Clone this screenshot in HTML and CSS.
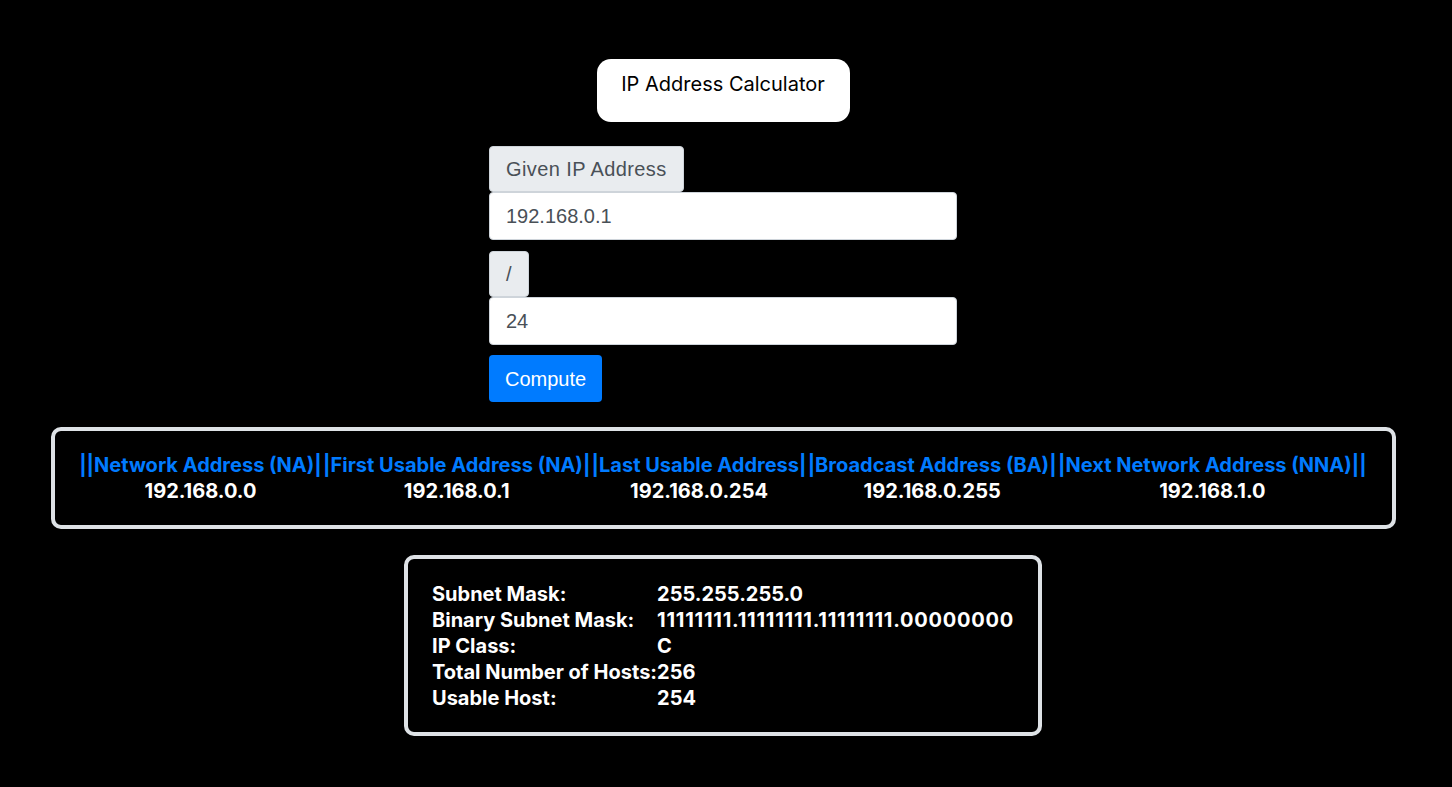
FILE: index.html
```html
<!DOCTYPE html>
<html lang="en">
<head>
<meta charset="utf-8">
<title>IP Address Calculator</title>
<link rel="stylesheet" href="styles.css">
</head>
<body>
<div class="page">
  <div class="title-card">IP Address Calculator</div>

  <form class="calc-form">
    <span class="addon">Given IP Address</span>
    <input class="field" type="text" value="192.168.0.1">
    <span class="addon addon-gap">/</span>
    <input class="field" type="text" value="24">
    <button class="btn" type="button">Compute</button>
  </form>

  <div class="result-box wide">
    <table class="addr-table">
      <thead>
        <tr>
          <th>||Network Address (NA)|</th>
          <th>|First Usable Address (NA)|</th>
          <th>|Last Usable Address|</th>
          <th>|Broadcast Address (BA)|</th>
          <th>|Next Network Address (NNA)||</th>
        </tr>
      </thead>
      <tbody>
        <tr>
          <td>192.168.0.0</td>
          <td>192.168.0.1</td>
          <td>192.168.0.254</td>
          <td>192.168.0.255</td>
          <td>192.168.1.0</td>
        </tr>
      </tbody>
    </table>
  </div>

  <div class="result-box narrow">
    <table class="info-table">
      <tr><td>Subnet Mask:</td><td>255.255.255.0</td></tr>
      <tr><td>Binary Subnet Mask:</td><td class="binary">11111111.11111111.11111111.00000000</td></tr>
      <tr><td>IP Class:</td><td>C</td></tr>
      <tr><td>Total Number of Hosts:</td><td>256</td></tr>
      <tr><td>Usable Host:</td><td>254</td></tr>
    </table>
  </div>
</div>
</body>
</html>
```

FILE: styles.css
```css
* { box-sizing: border-box; }

html, body {
  margin: 0;
  background: #000;
}

body {
  font-family: Inter, "Noto Sans", sans-serif;
  color: #fff;
}

.page {
  width: 1446px;
  display: flex;
  flex-direction: column;
  align-items: center;
}

.title-card {
  margin-top: 59px;
  width: 253px;
  height: 63px;
  padding: 10px 0 0;
  background: #fff;
  color: #000;
  border-radius: 14px;
  font-size: 20px;
  line-height: 30px;
  text-align: center;
}

.calc-form {
  margin-top: 24px;
  width: 468px;
  display: flex;
  flex-direction: column;
  align-items: flex-start;
  font-family: "Liberation Sans", Arial, sans-serif;
  font-size: 20px;
}

.addon {
  display: block;
  height: 46px;
  padding: 7px 16px;
  line-height: 30px;
  background: #e9ecef;
  color: #495057;
  border: 1px solid #ced4da;
  border-radius: 4px;
  letter-spacing: 0.4px;
}

.addon-gap { margin-top: 11px; }

.field {
  display: block;
  width: 100%;
  height: 48px;
  padding: 8px 16px;
  font: inherit;
  line-height: 30px;
  color: #495057;
  background: #fff;
  border: 1px solid #ced4da;
  border-radius: 4px;
  margin: 0;
}

.btn {
  margin-top: 10px;
  height: 47px;
  padding: 0 16px;
  font: inherit;
  line-height: 30px;
  color: #fff;
  background: #007bff;
  border: 0;
  border-radius: 4px;
}

.result-box {
  border: 4px solid #dee2e6;
  border-radius: 10px;
  padding: 21px 24px;
}

.wide {
  margin-top: 25px;
  width: 1345px;
}

.narrow {
  margin-top: 26px;
  padding-top: 22px;
}

.addr-table {
  width: 100%;
  border-collapse: collapse;
  font-size: 20px;
  font-weight: 700;
  line-height: 26px;
}

.addr-table th {
  color: #007bff;
  padding: 0;
  white-space: nowrap;
}

.addr-table td {
  color: #fff;
  padding: 0;
  text-align: center;
}

.info-table {
  border-collapse: collapse;
  font-size: 20px;
  font-weight: 700;
  line-height: 26px;
}

.info-table td {
  padding: 0;
  white-space: nowrap;
}

.info-table .binary {
  letter-spacing: 0.75px;
}
```
